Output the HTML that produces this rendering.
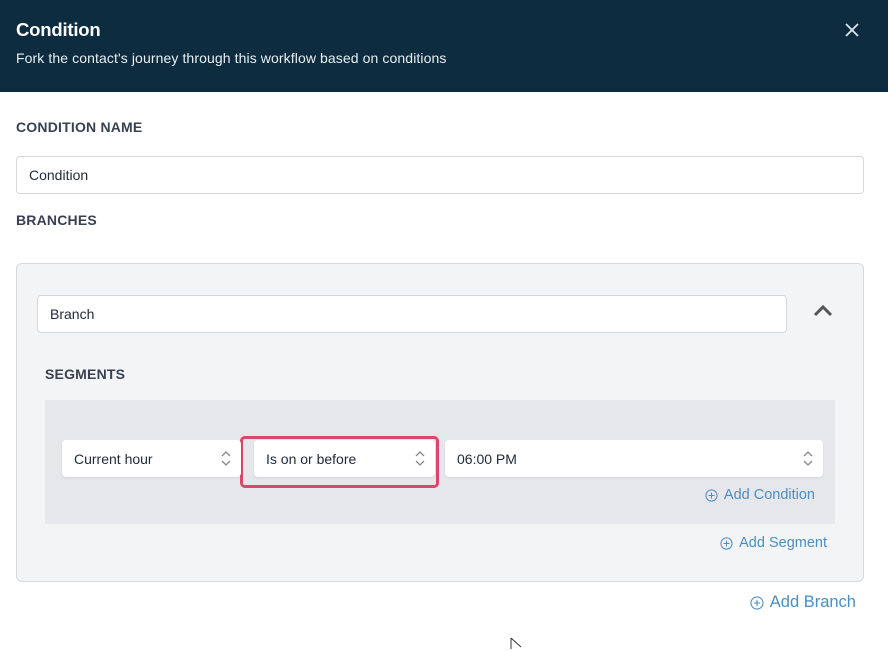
<!DOCTYPE html>
<html><head><meta charset="utf-8"><style>
*{box-sizing:border-box;margin:0;padding:0}
body{width:888px;height:649px;background:#fff;font-family:"Liberation Sans",sans-serif;position:relative;overflow:hidden;color:#1f2a37}
.a{position:absolute}
.hdr{left:0;top:0;width:888px;height:92px;background:#0e2c40;color:#fff}
.lbl{font-size:14px;font-weight:bold;color:#374151;letter-spacing:.2px}
.inp{background:#fff;border:1px solid #d4d7dc;border-radius:4px;font-size:14px;padding-left:12px;display:flex;align-items:center;color:#1f2937}
.sel{background:#fff;border-radius:4px;font-size:14px;padding-left:12px;display:flex;align-items:center;color:#1f2937;box-shadow:0 1px 2px rgba(0,0,0,.08)}
.arr{position:absolute;right:10px;top:10px}
.link{color:#4a8ec2;font-size:14.5px;display:flex;align-items:center;gap:6px}
</style></head><body>
<div class="a hdr">
 <div class="a" style="left:16px;top:19px;font-size:18.5px;font-weight:bold;letter-spacing:-.2px">Condition</div>
 <div class="a" style="left:16px;top:50px;font-size:14px;color:#e8eef3;letter-spacing:.1px">Fork the contact's journey through this workflow based on conditions</div>
 <svg class="a" style="left:844px;top:22px" width="16" height="16" viewBox="0 0 16 16"><path d="M2 2L14 14M14 2L2 14" stroke="#dfe7ee" stroke-width="1.8"/></svg>
</div>
<div class="a lbl" style="left:16px;top:119px">CONDITION NAME</div>
<div class="a inp" style="left:16px;top:156px;width:848px;height:38px">Condition</div>
<div class="a lbl" style="left:16px;top:212px">BRANCHES</div>
<div class="a" style="left:16px;top:263px;width:848px;height:319px;background:#f3f4f6;border:1px solid #d6d9dd;border-radius:6px"></div>
<div class="a inp" style="left:37px;top:295px;width:750px;height:38px">Branch</div>
<svg class="a" style="left:813px;top:304px" width="20" height="14" viewBox="0 0 20 14"><path d="M2 11L10 3L18 11" stroke="#555" stroke-width="3" fill="none"/></svg>
<div class="a lbl" style="left:45px;top:366px">SEGMENTS</div>
<div class="a" style="left:45px;top:400px;width:790px;height:124px;background:#e6e7ea;border-radius:2px"></div>
<div class="a" style="left:240px;top:436px;width:199px;height:52px;border:3.5px solid #d9476a;border-radius:5px"></div>
<div class="a sel" style="left:62px;top:440px;width:179px;height:37px">Current hour<svg class="arr" width="10" height="17" viewBox="0 0 10 17"><path d="M1 6L5 2L9 6M1 11L5 15L9 11" stroke="#888" stroke-width="1.3" fill="none"/></svg></div>
<div class="a sel" style="left:254px;top:440px;width:181px;height:37px">Is on or before<svg class="arr" width="10" height="17" viewBox="0 0 10 17"><path d="M1 6L5 2L9 6M1 11L5 15L9 11" stroke="#888" stroke-width="1.3" fill="none"/></svg></div>
<div class="a sel" style="left:445px;top:440px;width:378px;height:37px">06:00 PM<svg class="arr" width="10" height="17" viewBox="0 0 10 17"><path d="M1 6L5 2L9 6M1 11L5 15L9 11" stroke="#888" stroke-width="1.3" fill="none"/></svg></div>
<div class="a link" style="right:73px;top:487px"><svg width="13" height="13" viewBox="0 0 13 13"><circle cx="6.5" cy="6.5" r="5.6" stroke="#4a8ec2" fill="none"/><path d="M6.5 3.5V9.5M3.5 6.5H9.5" stroke="#4a8ec2"/></svg>Add Condition</div>
<div class="a link" style="right:61px;top:535px"><svg width="13" height="13" viewBox="0 0 13 13"><circle cx="6.5" cy="6.5" r="5.6" stroke="#4a8ec2" fill="none"/><path d="M6.5 3.5V9.5M3.5 6.5H9.5" stroke="#4a8ec2"/></svg>Add Segment</div>
<div class="a link" style="right:32px;top:593px;font-size:16.5px"><svg width="14" height="14" viewBox="0 0 13 13"><circle cx="6.5" cy="6.5" r="5.6" stroke="#4a8ec2" fill="none"/><path d="M6.5 3.5V9.5M3.5 6.5H9.5" stroke="#4a8ec2"/></svg>Add Branch</div>
<svg class="a" style="left:510px;top:637px" width="14" height="14" viewBox="0 0 14 14"><path d="M1 1V12M1 1L11 10" stroke="#333" stroke-width="1" fill="none"/></svg>
</body></html>
